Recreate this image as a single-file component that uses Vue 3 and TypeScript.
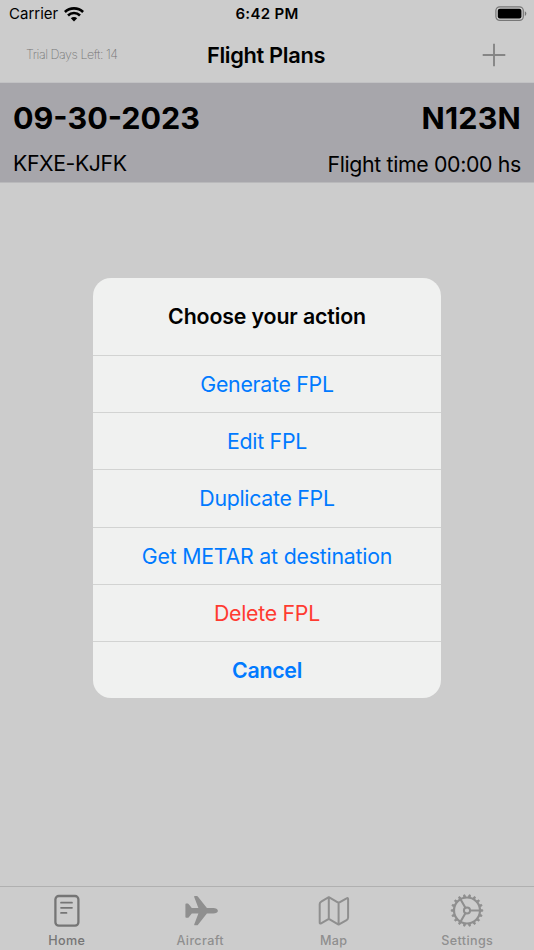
<script setup lang="ts">
interface Action {
  label: string
  kind: 'normal' | 'destructive' | 'cancel'
  id: string
}

const actions: Action[] = [
  { label: 'Generate FPL', kind: 'normal', id: 'generate' },
  { label: 'Edit FPL', kind: 'normal', id: 'edit' },
  { label: 'Duplicate FPL', kind: 'normal', id: 'duplicate' },
  { label: 'Get METAR at destination', kind: 'normal', id: 'metar' },
  { label: 'Delete FPL', kind: 'destructive', id: 'delete' },
  { label: 'Cancel', kind: 'cancel', id: 'cancel' },
]

const tabs: string[] = ['Home', 'Aircraft', 'Map', 'Settings']

// Angles of the teeth around the settings gear
const teeth: number[] = Array.from({ length: 18 }, (_, i) => i * 20)
</script>

<template>
  <div class="screen">
    <header class="status">
      <div class="carrier">
        <span class="carrier-name">Carrier</span>
        <svg class="wifi" width="20" height="15" viewBox="0 0 20 15">
          <path d="M.9 5a13.2 13.2 0 0 1 18.2 0" />
          <path d="M4 8.5a8.6 8.6 0 0 1 12 0" />
          <path class="dot" d="M10 14.4 6.8 11.2a4.6 4.6 0 0 1 6.4 0z" />
        </svg>
      </div>
      <span class="clock">6:42 PM</span>
      <svg class="battery" width="32" height="16" viewBox="0 0 32 16">
        <rect x=".9" y=".8" width="27.4" height="13.6" rx="3.8" fill="none" stroke="#777" stroke-width="1.2" />
        <rect x="2.8" y="2.7" width="23.6" height="9.8" rx="2" fill="#000" />
        <path d="M29.8 5.3c2 .8 2 3.8 0 4.6z" fill="#777" />
      </svg>
    </header>

    <nav class="nav">
      <span class="trial">Trial Days Left: 14</span>
      <h1 class="title">Flight Plans</h1>
      <svg class="plus" width="24" height="24" viewBox="0 0 24 24">
        <path d="M12 .7v22.6M.7 12h22.6" stroke="#858585" stroke-width="1.9" />
      </svg>
    </nav>

    <section class="plan">
      <div class="plan-row strong">
        <span class="date">09-30-2023</span>
        <span class="tail">N123N</span>
      </div>
      <div class="plan-row">
        <span class="route">KFXE-KJFK</span>
        <span class="time">Flight time 00:00 hs</span>
      </div>
    </section>

    <main class="body">
      <div class="alert">
        <h2 class="alert-title"><span>Choose your action</span></h2>
        <button v-for="a in actions" :key="a.id" class="action" :class="[a.kind, a.id]">
          <span>{{ a.label }}</span>
        </button>
      </div>
    </main>

    <footer class="tabs">
      <div v-for="(t, i) in tabs" :key="t" class="tab" :class="{ active: i === 0 }">
        <svg v-if="i === 0" width="36" height="36" viewBox="0 0 36 36" class="line">
          <rect x="6.4" y="3" width="23" height="29.6" rx="3.4" stroke-width="2.3" />
          <path d="M12 9.7h11M12 14.8h11M12 19.9h5.5" stroke-width="1.7" />
        </svg>
        <svg v-else-if="i === 1" width="36" height="36" viewBox="0 0 36 36">
          <path
            fill="currentColor"
            transform="translate(.6 -.6)"
            d="M12 3.7h2.3c.5 0 .8.2 1.1.6l8.9 11.2h6.4c2.5 0 4.6 1.1 4.6 2.8s-2.1 2.8-4.6 2.8h-6.4l-8.9 11.2c-.3.4-.6.6-1.1.6H12c-.4 0-.6-.4-.4-.8l4.2-11H9.2l-3 3.7c-.3.4-.7.6-1.2.6H3.6c-.5 0-.8-.3-.8-.8V12c0-.5.3-.8.8-.8H5c.5 0 .9.2 1.2.6l3 3.7h6.6l-4.2-11c-.2-.4 0-.8.4-.8z"
          />
        </svg>
        <svg v-else-if="i === 2" width="36" height="36" viewBox="0 0 36 36" class="line">
          <path
            transform="translate(0 -.8)"
            d="M12.8 5 5.2 9.4q-1.5.8-1.5 2.5v18.4q0 1.6 1.4.8l7.7-4.4 9.8 5.7 8-4.5q1.5-.8 1.5-2.5V7q0-1.7-1.5-.8l-8 4.5zM12.8 5v21.7M22.6 10.7v21.7"
            stroke-width="2"
          />
        </svg>
        <svg v-else width="36" height="36" viewBox="0 0 36 36" class="line">
          <g transform="translate(0 -.5)">
            <circle cx="18" cy="18" r="13" stroke-width="2.2" />
            <circle cx="18" cy="18" r="3.1" stroke-width="2" />
            <path d="M21.1 18H31M16.4 15.2 11.5 6.8M16.4 20.8l-4.9 8.4" stroke-width="2.1" />
            <path
              v-for="angle in teeth"
              :key="angle"
              d="M17 4.6 17.3 2.2h1.4l.3 2.4z"
              :transform="`rotate(${angle + 10} 18 18)`"
              stroke-width=".8"
              fill="currentColor"
            />
          </g>
        </svg>
        <span class="tab-label">{{ t }}</span>
      </div>
    </footer>
  </div>
</template>

<style>
body {
  margin: 0;
  background: #ccc;
}
</style>

<style scoped>
.screen {
  width: 534px;
  height: 950px;
  display: flex;
  flex-direction: column;
  overflow: hidden;
  background: #ccc;
  color: #000;
  font-family: Inter, "Liberation Sans", sans-serif;
}

h1,
h2 {
  margin: 0;
}

.status {
  height: 28px;
  flex: none;
  display: grid;
  grid-template-columns: 1fr auto 1fr;
  align-items: center;
  box-sizing: border-box;
  padding: 0 7px 0 9px;
  font-size: 15px;
  line-height: 26px;
}

.carrier {
  display: flex;
  align-items: center;
  gap: 6px;
}

.wifi {
  fill: none;
  stroke: #000;
  stroke-width: 2.6;
}

.wifi .dot {
  fill: #000;
  stroke: none;
}

.clock {
  font-weight: 600;
  letter-spacing: 0.3px;
  margin-right: 2px;
}

.battery {
  justify-self: end;
}

.nav {
  height: 55px;
  flex: none;
  display: grid;
  grid-template-columns: 1fr auto 1fr;
  align-items: center;
  box-sizing: border-box;
  padding: 0 28px 1px 26px;
  border-bottom: 1px solid #c2c2c4;
}

.trial {
  font-size: 12.5px;
  font-weight: 200;
  letter-spacing: -0.46px;
  color: #777;
}

.title {
  font-size: 21.8px;
  font-weight: 600;
  letter-spacing: -0.32px;
}

.plus {
  justify-self: end;
}

.plan {
  height: 100px;
  flex: none;
  box-sizing: border-box;
  padding: 15px 13px 0;
  background: #a7a6ab;
  border-bottom: 1px solid #b9b9bb;
}

.plan-row {
  display: flex;
  justify-content: space-between;
  font-size: 21.3px;
  line-height: 40px;
  padding-top: 5px;
}

.strong {
  font-size: 30.5px;
  font-weight: 700;
  padding: 0;
}

.tail {
  letter-spacing: 0.2px;
}

.route {
  letter-spacing: -0.42px;
}

.time {
  padding-top: 1px;
  letter-spacing: -0.34px;
}

.body {
  flex: 1;
  display: flex;
  justify-content: center;
  align-items: flex-start;
  padding-top: 95px;
}

.alert {
  width: 348px;
  height: 420px;
  border-radius: 18px;
  background: #f0f1f0;
  display: flex;
  flex-direction: column;
  overflow: hidden;
}

.alert-title {
  height: 77px;
  flex: none;
  font-size: 21.3px;
  font-weight: 600;
  line-height: 77px;
  letter-spacing: -0.12px;
  text-align: center;
}

.action {
  flex: 1;
  border: 0;
  border-top: 1px solid #d2d3d2;
  padding: 0;
  background: transparent;
  font: inherit;
  font-size: 21.3px;
  letter-spacing: -0.28px;
  color: #007aff;
}

.metar {
  letter-spacing: -0.21px;
}

.destructive {
  color: #ff3b30;
}

.cancel {
  font-weight: 600;
}

.tabs {
  height: 64px;
  flex: none;
  box-sizing: border-box;
  display: grid;
  grid-template-columns: repeat(4, 1fr);
  border-top: 1px solid #b0b0b0;
}

.tab {
  display: flex;
  flex-direction: column;
  align-items: center;
  padding-top: 6px;
  color: #8f8f8f;
}

.active {
  color: #757575;
}

.line {
  fill: none;
  stroke: currentColor;
  stroke-linecap: round;
  stroke-linejoin: round;
}

.tab-label {
  margin-top: 4px;
  font-size: 12.6px;
  font-weight: 500;
  line-height: 16px;
  letter-spacing: 0.35px;
}
</style>
